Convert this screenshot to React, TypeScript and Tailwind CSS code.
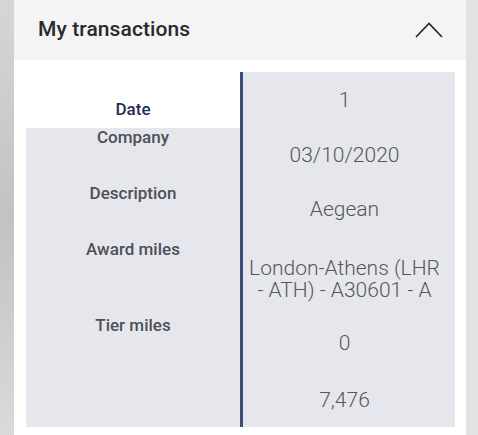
export default function App() {
  const label = "text-[17px] leading-[20px] font-medium text-[#4d5058] text-center";
  const val = "text-[21px] leading-[22px] font-light text-[#55575c] text-center";
  return (
    <div className="w-[478px] h-[435px] flex overflow-hidden" style={{ fontFamily: "Roboto, 'Liberation Sans', sans-serif" }}>
      <div className="w-[14px] h-full bg-gradient-to-b from-[#d6d6d6] via-[#c2c2c2] to-[#dadada]" />
      <div className="flex-1 flex flex-col bg-white">
        <div className="h-[60px] bg-[#f4f4f4] flex items-center justify-between pl-[24px] pr-[23px]">
          <span className="text-[21px] font-medium text-[#2a2a2c] tracking-[0.1px]">My transactions</span>
          <svg width="28" height="16" viewBox="0 0 28 16" fill="none">
            <path d="M1 15 L14 1.5 L27 15" stroke="#222" strokeWidth="1.6" />
          </svg>
        </div>
        <div className="flex-1 pt-[12px] pl-[12px] pr-[11px]">
          <div className="flex h-[355px]">
            <div className="w-[214px] flex flex-col">
              <div className="h-[56px] bg-white pt-[27px]">
                <div className="text-[17px] leading-[20px] font-medium text-[#1f2d52] text-center">Date</div>
              </div>
              <div className="flex-1 bg-[#e6e7ec] flex flex-col">
                <div className={`${label} -mt-[1px]`}>Company</div>
                <div className={`${label} mt-[36px]`}>Description</div>
                <div className={`${label} mt-[36px]`}>Award miles</div>
                <div className={`${label} mt-[56px]`}>Tier miles</div>
              </div>
            </div>
            <div className="w-[3px] bg-[#3b4f7a]" />
            <div className="w-[212px] bg-[#e6e7ec] flex flex-col pt-[17px] pr-[9px]">
              <div className={val}>1</div>
              <div className={`${val} mt-[33px]`}>03/10/2020</div>
              <div className={`${val} mt-[32px]`}>Aegean</div>
              <div className={`${val} mt-[37px] whitespace-nowrap`}>London-Athens (LHR<br />- ATH) - A30601 - A</div>
              <div className={`${val} mt-[31px]`}>0</div>
              <div className={`${val} mt-[35px]`}>7,476</div>
            </div>
          </div>
        </div>
      </div>
      <div className="w-[12px] h-full bg-[#e2e2e2]" />
    </div>
  );
}
